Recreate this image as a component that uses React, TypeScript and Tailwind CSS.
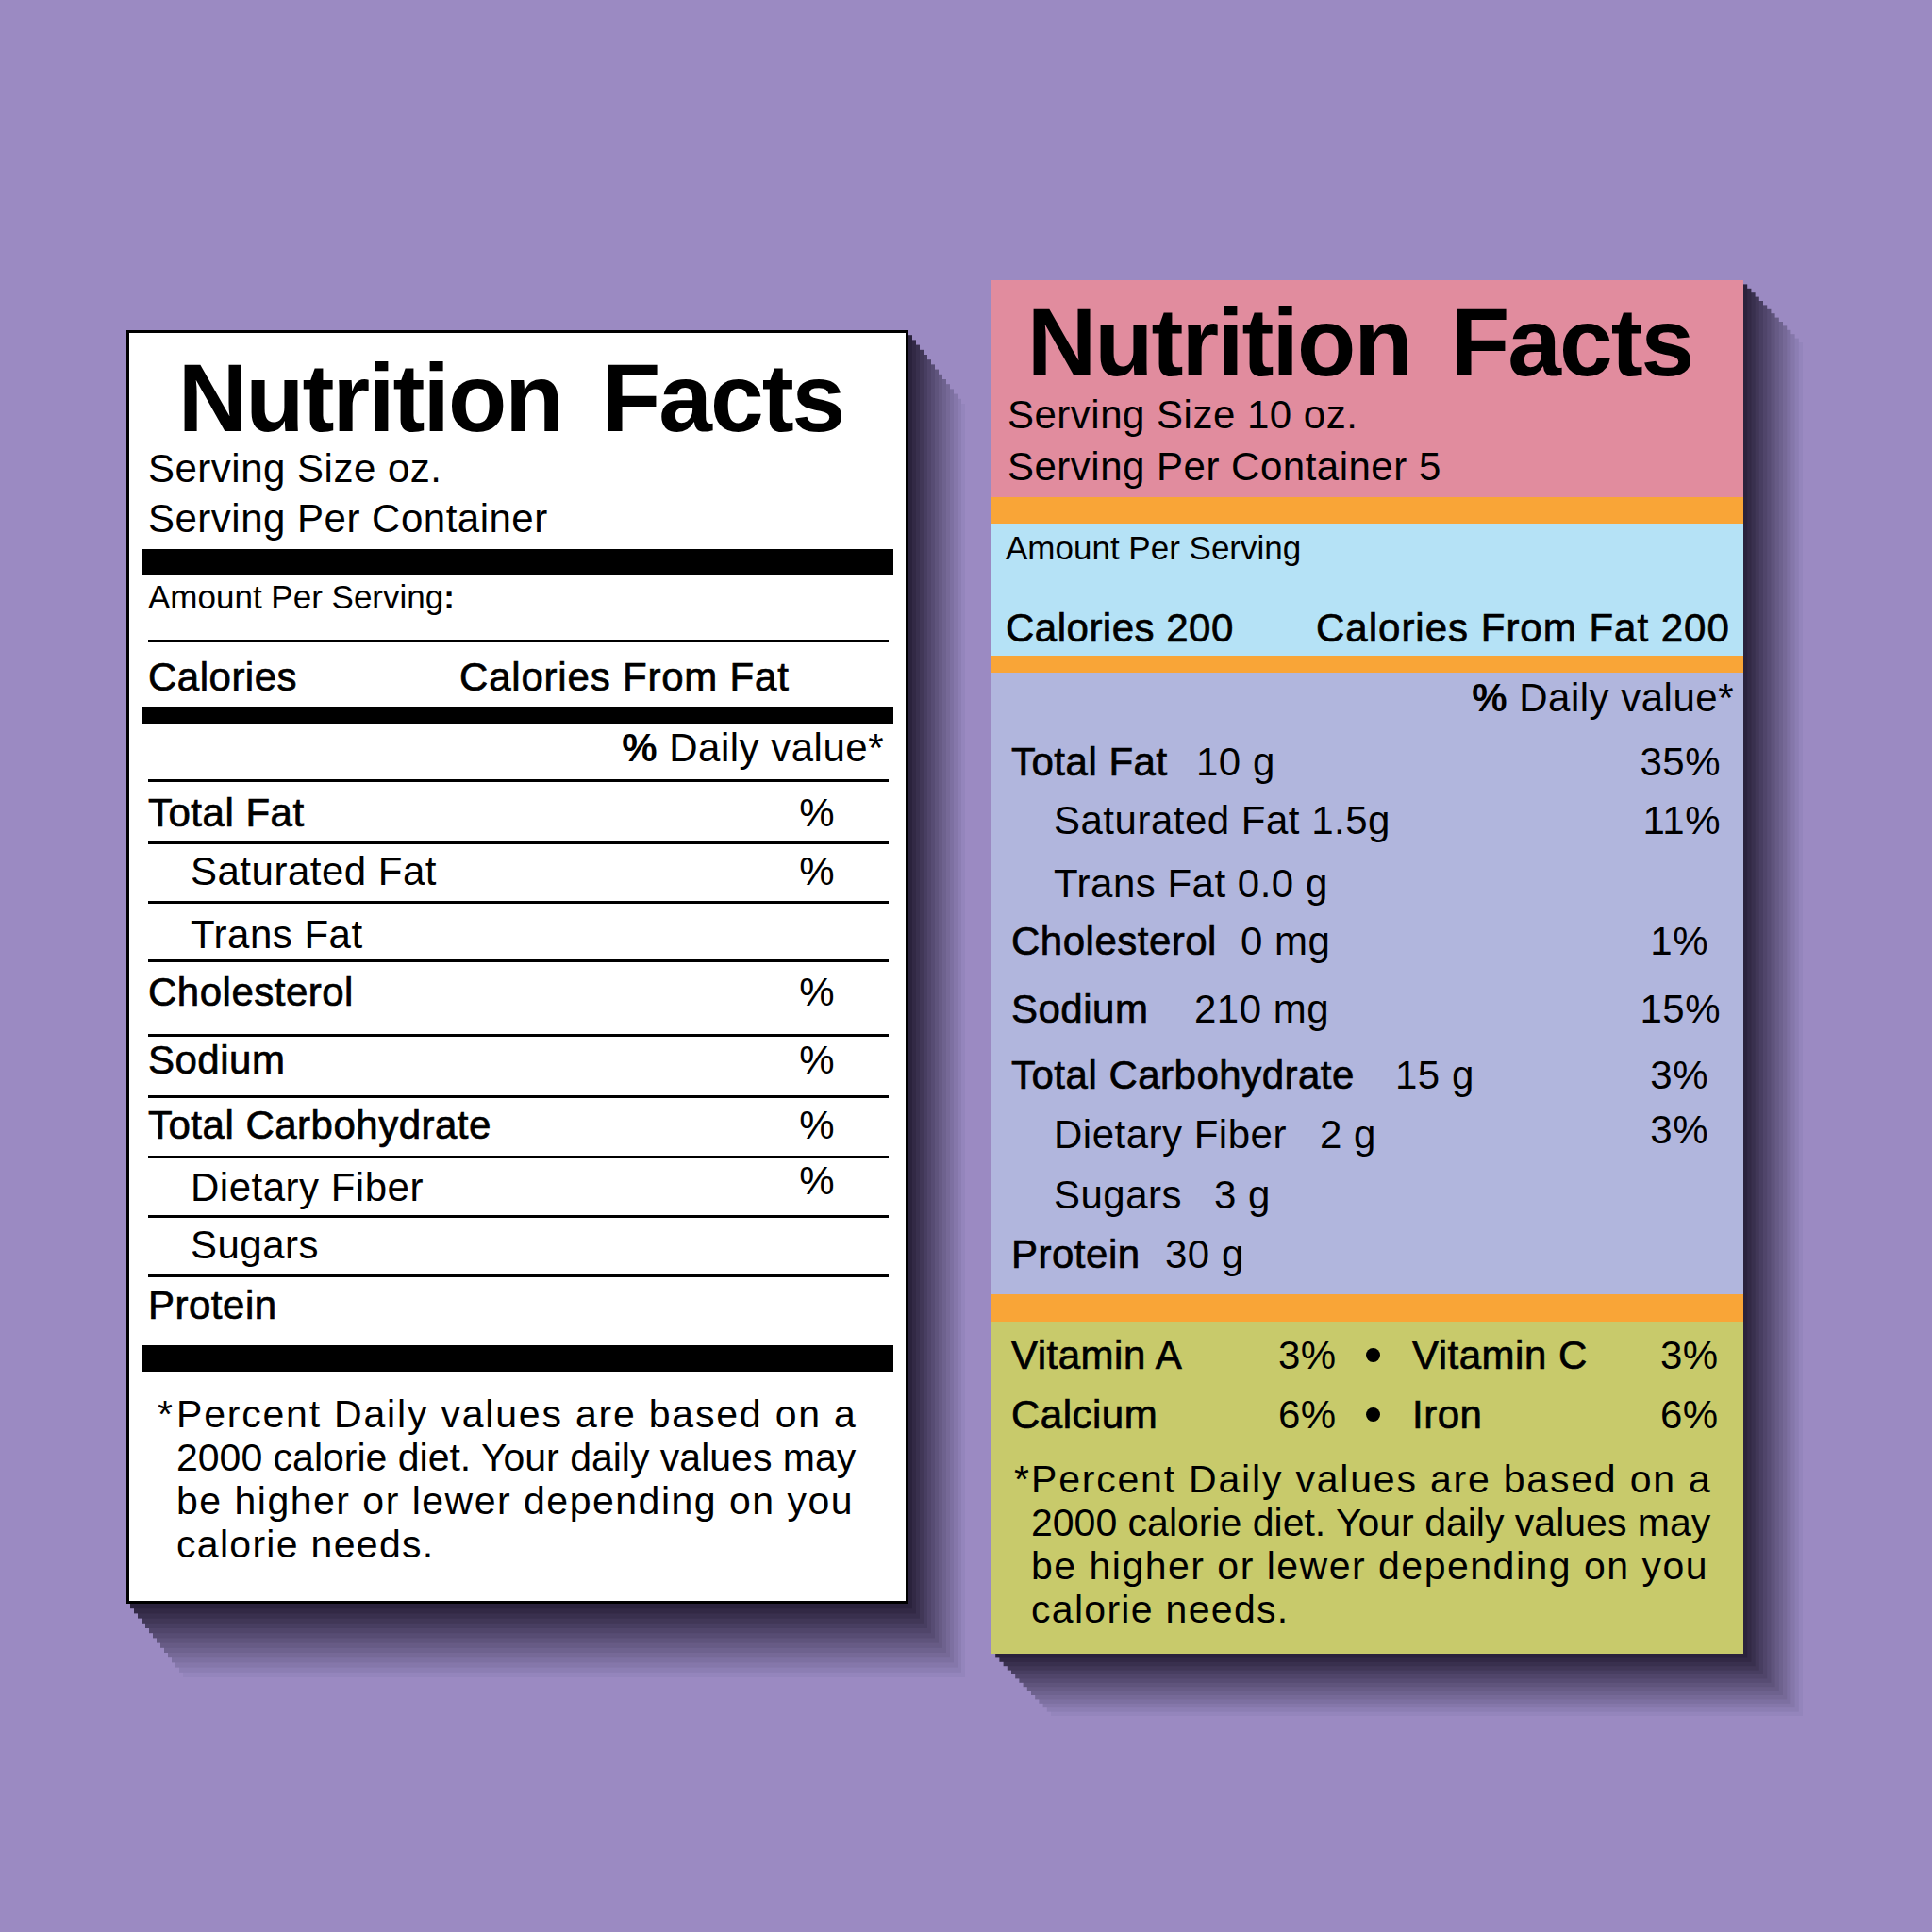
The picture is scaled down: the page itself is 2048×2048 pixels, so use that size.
import React from "react";

const MED = "[-webkit-text-stroke:0.7px_black]";

function LeftCard() {
  return (
    <div className="mt-[53px] w-[829px] h-[1350px] shrink-0 border-[3px] border-black bg-white flex flex-col [box-shadow:4px_5.2px_0_#2a223c,8px_10.4px_0_#322945,12px_15.6px_0_#39304e,16px_20.8px_0_#413757,20px_26px_0_#483e61,24px_31.2px_0_#50456a,28px_36.4px_0_#574c73,32px_41.6px_0_#5f547c,36px_46.8px_0_#675b85,40px_52px_0_#6e628e,44px_57.2px_0_#766997,48px_62.4px_0_#7d70a1,52px_67.6px_0_#8577aa,56px_72.8px_0_#8c7eb3,60px_78px_0_#9485bc]">
      <div className="h-[117px] shrink-0 pt-[21px] pr-[14px] text-center text-[102px] leading-[96px] font-bold tracking-[-2px] [word-spacing:16px]">
        Nutrition Facts
      </div>
      <div className="pl-[20px] text-[42px] leading-[53px]">
        <div>Serving Size oz.</div>
        <div>Serving Per Container</div>
      </div>
      <div className="mt-[6px] mx-[13px] h-[27px] shrink-0 bg-black" />
      <div className="ml-[20px] mr-[18px] h-[72px] shrink-0 border-b-[3px] border-black pt-[6px] text-[35px] leading-none tracking-normal">
        Amount Per Serving<span className="font-bold">:</span>
      </div>
      <div className="ml-[20px] mr-[18px] h-[68px] shrink-0 pt-[16px] flex leading-none">
        <span className={`w-[330px] ${MED}`}>Calories</span>
        <span className={`tracking-[0.8px] ${MED}`}>Calories From Fat</span>
      </div>
      <div className="mx-[13px] h-[18px] shrink-0 bg-black" />
      <div className="ml-[20px] mr-[18px] h-[62px] shrink-0 border-b-[3px] border-black pt-[5px] pr-[5px] text-right leading-none">
        <span className="font-bold">%</span> Daily value*
      </div>
      <div className="ml-[20px] mr-[18px] flex flex-col leading-none">
        <div className="h-[66px] pt-[12px] pr-[57px] flex justify-between border-b-[3px] border-black">
          <span className={MED}>Total Fat</span>
          <span>%</span>
        </div>
        <div className="h-[63px] pt-[8px] pl-[45px] pr-[57px] flex justify-between border-b-[3px] border-black">
          <span>Saturated Fat</span>
          <span>%</span>
        </div>
        <div className="h-[62px] pt-[12px] pl-[45px] pr-[57px] flex justify-between border-b-[3px] border-black">
          <span>Trans Fat</span>
        </div>
        <div className="h-[79px] pt-[11px] pr-[57px] flex justify-between border-b-[3px] border-black">
          <span className={MED}>Cholesterol</span>
          <span>%</span>
        </div>
        <div className="h-[65px] pt-[4px] pr-[57px] flex justify-between border-b-[3px] border-black">
          <span className={MED}>Sodium</span>
          <span>%</span>
        </div>
        <div className="h-[64px] pt-[8px] pr-[57px] flex justify-between border-b-[3px] border-black">
          <span className={MED}>Total Carbohydrate</span>
          <span>%</span>
        </div>
        <div className="h-[63px] pt-[10px] pl-[45px] pr-[57px] flex justify-between border-b-[3px] border-black">
          <span>Dietary Fiber</span>
          <span className="-mt-[7px]">%</span>
        </div>
        <div className="h-[63px] pt-[8px] pl-[45px] pr-[57px] flex justify-between border-b-[3px] border-black">
          <span>Sugars</span>
        </div>
        <div className="h-[72px] pt-[9px] pr-[57px] flex justify-between">
          <span className={MED}>Protein</span>
        </div>
      </div>
      <div className="mx-[13px] h-[28px] shrink-0 bg-black" />
      <div className="mt-[22px] pl-[30px] flex text-[41px] leading-[46px] tracking-normal">
        <span className="w-[20px] shrink-0">*</span>
        <div className="w-[725px] whitespace-nowrap">
          <div className="tracking-[1.8px]">Percent Daily values are based on a</div>
          <div className="tracking-[0px]">2000 calorie diet. Your daily values may</div>
          <div className="tracking-[1.5px]">be higher or lewer depending on you</div>
          <div className="tracking-[1.3px]">calorie needs.</div>
        </div>
      </div>
    </div>
  );
}

function RightCard() {
  return (
    <div className="w-[797px] h-[1456px] shrink-0 flex flex-col [box-shadow:4.2px_4.4px_0_#2a223c,8.4px_8.8px_0_#322945,12.6px_13.2px_0_#39304e,16.8px_17.6px_0_#413757,21px_22px_0_#483e61,25.2px_26.4px_0_#50456a,29.4px_30.8px_0_#574c73,33.6px_35.2px_0_#5f547c,37.8px_39.6px_0_#675b85,42px_44px_0_#6e628e,46.2px_48.4px_0_#766997,50.4px_52.8px_0_#7d70a1,54.6px_57.2px_0_#8577aa,58.8px_61.6px_0_#8c7eb3,63px_66px_0_#9485bc]">
      <div className="h-[230px] shrink-0 bg-[#e18c9e]">
        <div className="h-[115px] pt-[18px] pr-[16px] text-center text-[102px] leading-[97px] font-bold tracking-[-2px] [word-spacing:16px]">
          Nutrition Facts
        </div>
        <div className="pl-[17px] text-[42px] leading-[55px]">
          <div>Serving Size 10 oz.</div>
          <div>Serving Per Container 5</div>
        </div>
      </div>
      <div className="h-[28px] shrink-0 bg-[#f9a537]" />
      <div className="h-[140px] shrink-0 bg-[#b5e2f6] pl-[15px]">
        <div className="pt-[8px] text-[35px] leading-none tracking-normal">Amount Per Serving</div>
        <div className="mt-[47px] flex leading-none">
          <span className={`w-[329px] ${MED}`}>Calories 200</span>
          <span className={`tracking-[1px] ${MED}`}>Calories From Fat 200</span>
        </div>
      </div>
      <div className="h-[18px] shrink-0 bg-[#f9a537]" />
      <div className="h-[659px] shrink-0 bg-[#b1b6dd] flex flex-col leading-none">
        <div className="h-[68px] pt-[6px] pr-[10px] text-right">
          <span className="font-bold">%</span> Daily value*
        </div>
        <div className="h-[62px] pt-[6px] pl-[21px] flex">
          <span className={`w-[196px] ${MED}`}>Total Fat</span>
          <span>10 g</span>
          <span className="ml-auto pr-[24px]">35%</span>
        </div>
        <div className="h-[67px] pt-[6px] pl-[66px] flex">
          <span>Saturated Fat 1.5g</span>
          <span className="ml-auto pr-[24px]">11%</span>
        </div>
        <div className="h-[61px] pt-[6px] pl-[66px] flex">
          <span>Trans Fat 0.0 g</span>
        </div>
        <div className="h-[72px] pt-[6px] pl-[21px] flex">
          <span className={`w-[243px] ${MED}`}>Cholesterol</span>
          <span>0 mg</span>
          <span className="ml-auto pr-[37px]">1%</span>
        </div>
        <div className="h-[70px] pt-[6px] pl-[21px] flex">
          <span className={`w-[194px] ${MED}`}>Sodium</span>
          <span>210 mg</span>
          <span className="ml-auto pr-[24px]">15%</span>
        </div>
        <div className="h-[63px] pt-[6px] pl-[21px] flex">
          <span className={`w-[407px] ${MED}`}>Total Carbohydrate</span>
          <span>15 g</span>
          <span className="ml-auto pr-[37px]">3%</span>
        </div>
        <div className="h-[64px] pt-[6px] pl-[66px] flex">
          <span className="w-[282px]">Dietary Fiber</span>
          <span>2 g</span>
          <span className="ml-auto pr-[37px] -mt-[5px]">3%</span>
        </div>
        <div className="h-[63px] pt-[6px] pl-[66px] flex">
          <span className="w-[170px]">Sugars</span>
          <span>3 g</span>
        </div>
        <div className="h-[69px] pt-[6px] pl-[21px] flex">
          <span className={`w-[163px] ${MED}`}>Protein</span>
          <span>30 g</span>
        </div>
      </div>
      <div className="h-[29px] shrink-0 bg-[#f9a537]" />
      <div className="h-[352px] shrink-0 bg-[#c8ca6b] pt-[9px]">
        <div className="h-[63px] pt-[6px] pl-[21px] flex leading-none">
          <span className={`w-[283px] ${MED}`}>Vitamin A</span>
          <span className="w-[59px]">3%</span>
          <span className="w-[83px] -mt-[6px] pt-[19px] flex justify-center">
            <span className="block w-[15px] h-[15px] rounded-full bg-black" />
          </span>
          <span className={`w-[263px] ${MED}`}>Vitamin C</span>
          <span>3%</span>
        </div>
        <div className="h-[63px] pt-[6px] pl-[21px] flex leading-none">
          <span className={`w-[283px] ${MED}`}>Calcium</span>
          <span className="w-[59px]">6%</span>
          <span className="w-[83px] -mt-[6px] pt-[19px] flex justify-center">
            <span className="block w-[15px] h-[15px] rounded-full bg-black" />
          </span>
          <span className={`w-[263px] ${MED}`}>Iron</span>
          <span>6%</span>
        </div>
        <div className="mt-[9px] pl-[24px] flex text-[41px] leading-[46px] tracking-normal">
          <span className="w-[18px] shrink-0">*</span>
          <div className="w-[724px] whitespace-nowrap">
            <div className="tracking-[1.8px]">Percent Daily values are based on a</div>
            <div className="tracking-[0px]">2000 calorie diet. Your daily values may</div>
            <div className="tracking-[1.5px]">be higher or lewer depending on you</div>
            <div className="tracking-[1.3px]">calorie needs.</div>
          </div>
        </div>
      </div>
    </div>
  );
}

export default function App() {
  return (
    <div className="w-[2048px] h-[2048px] overflow-hidden bg-[#9b8ac2] flex items-start pl-[134px] pt-[297px] gap-[88px] font-['Liberation_Sans',Arial,sans-serif] text-black text-[42px] tracking-[0.5px]">
      <LeftCard />
      <RightCard />
    </div>
  );
}
